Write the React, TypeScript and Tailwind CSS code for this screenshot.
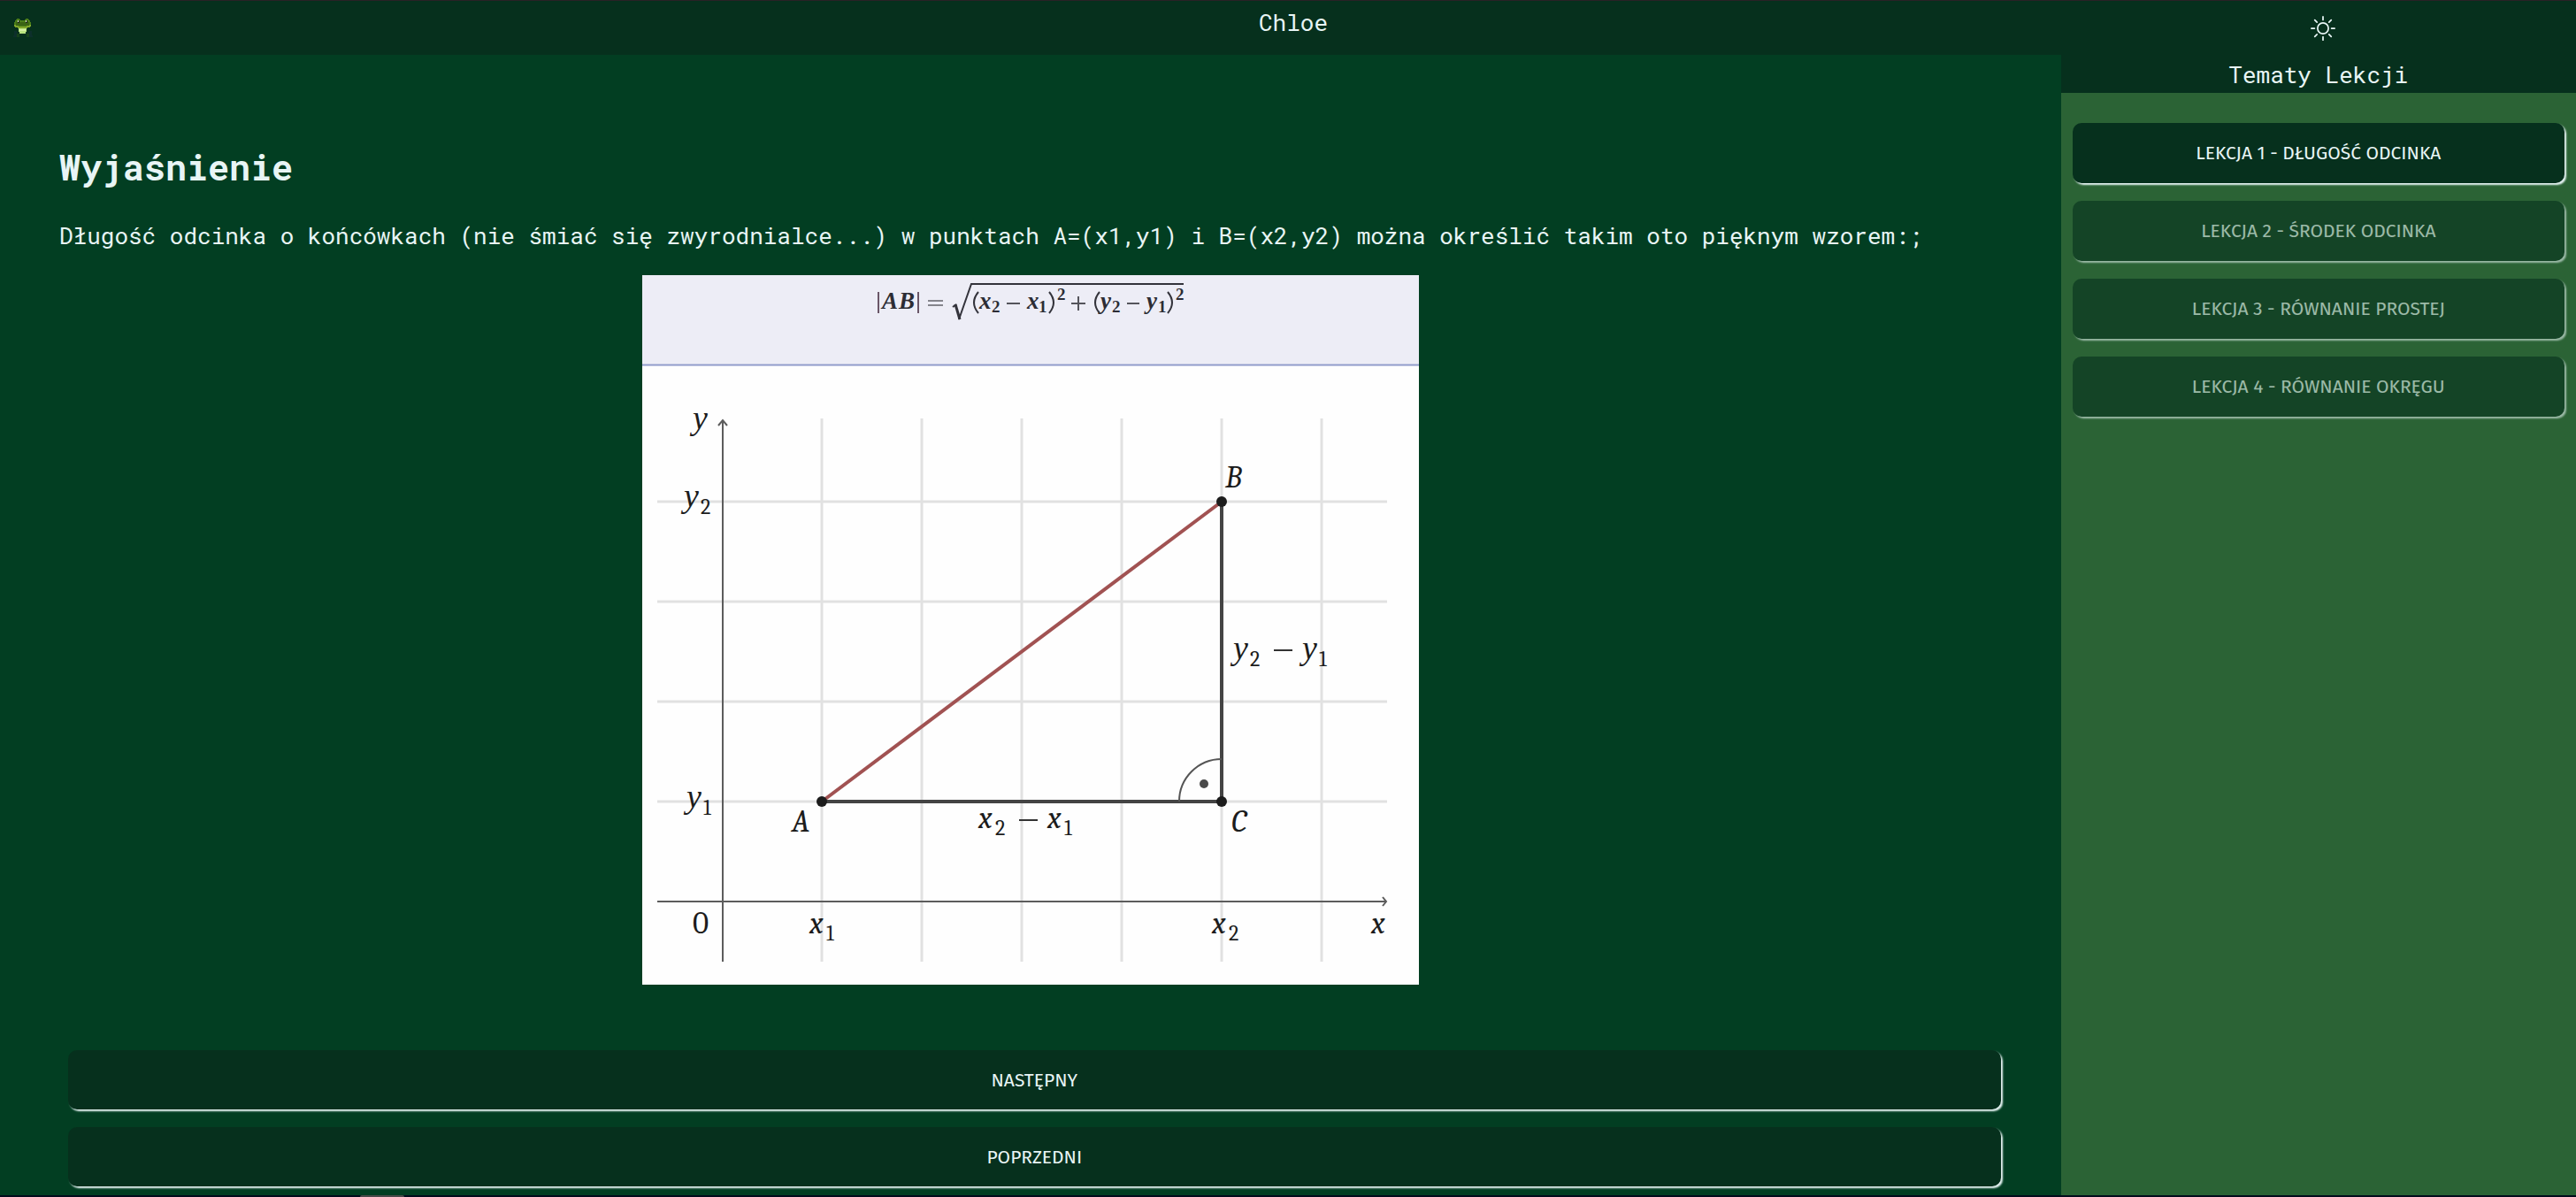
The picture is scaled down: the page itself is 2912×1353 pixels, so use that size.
import { BsSun } from "react-icons/bs";

const lessons = [
  { title: "LEKCJA 1 - DŁUGOŚĆ ODCINKA", open: true },
  { title: "LEKCJA 2 - ŚRODEK ODCINKA", open: false },
  { title: "LEKCJA 3 - RÓWNANIE PROSTEJ", open: false },
  { title: "LEKCJA 4 - RÓWNANIE OKRĘGU", open: false },
];

const buttonBase =
  "w-full rounded-[10px] bg-[#06301d] text-center font-['Fira_Sans','Noto_Sans',sans-serif] text-[21px] leading-7 text-[#e8f5f5] shadow-[2px_2px_2px_#e8f5f5]";

function Frog() {
  return (
    <svg viewBox="0 0 24 22" className="h-[22px] w-6" shapeRendering="crispEdges" role="img" aria-label="Żabka">
      <path fill="#0d2f2b" d="M2 14h3v7H1v-2h1zM19 14h3v5h1v2h-4z" />
      <path fill="#14401a" d="M5 17h3v4H5zM16 17h3v4h-3z" />
      <path fill="#4b7d1a" d="M5 0h3v1h1v1h5V1h1V0h3v1h1v1h1v2h1v3h-1v2H3V7H2V4h1V2h1V1h1z" />
      <path fill="#3a6414" d="M4 4h15v4H4z" />
      <path fill="#7fa62a" d="M2 7h2v1h3v1h9V8h3V7h2v2h-1v1h-3v1H6v-1H3V9H2z" />
      <path fill="#1c2410" d="M6 2h2v3H6zM15 2h2v3h-2z" />
      <path fill="#e6efe0" d="M6 2h1v2H6zM15 2h1v2h-1z" />
      <path fill="#b9e37f" d="M7 11h9v4h-1v2H8v-2H7z" />
      <path fill="#d6f0a4" d="M8 12h7v2H8z" />
    </svg>
  );
}

const gridX = [203, 316, 429, 542, 655, 768];
const gridY = [256, 369, 482, 595];

function Sym({ x, y, v, sub }: { x: number; y: number; v: string; sub?: string }) {
  const family = v === "y" ? "'Liberation Serif',serif" : "'Cambria','Liberation Serif',serif";
  return (
    <>
      <text x={x} y={y} fontSize={v === "y" ? 38 : 35} fontStyle="italic" fontFamily={family}>{v}</text>
      {sub && <text x={x + 19} y={y + 8} fontSize="24">{sub}</text>}
    </>
  );
}

function Figure() {
  return (
    <svg
      viewBox="0 0 878 802"
      className="w-[878px] max-w-full"
      fontFamily="'Cambria','Liberation Serif',serif"
      fill="#1c1c1c"
      role="img"
      aria-label="Długość odcinka AB w układzie współrzędnych"
    >
      <rect width="878" height="802" fill="#fefefe" />
      <rect width="878" height="101" fill="#ededf6" />
      <rect y="100" width="878" height="3" fill="#c5cae3" />
      <rect y="101" width="878" height="1" fill="#8f9bcb" />

      <g fontSize="27" fill="#2c2c34" fontWeight="bold" fontFamily="'Liberation Serif',serif">
        <g fontStyle="italic">
          <text x="271" y="38">A</text>
          <text x="290" y="38">B</text>
          <text x="381" y="38">x</text>
          <text x="435" y="38">x</text>
          <text x="518" y="38">y</text>
          <text x="570" y="38">y</text>
        </g>
        <g fontSize="19">
          <text x="395" y="42">2</text>
          <text x="448" y="42">1</text>
          <text x="531" y="42">2</text>
          <text x="583" y="42">1</text>
          <text x="469" y="28">2</text>
          <text x="603" y="28">2</text>
        </g>
      </g>
      <g fill="none" stroke="#33333b" strokeWidth="2">
        <path d="M267 19v24M312 19v24" stroke="#6a5668" />
        <path d="M323 29h17M323 34h17" stroke="#85858c" />
        <path d="M412 32h15M548 32h14M485 32h16M493 24v16" stroke="#55555c" />
        <path d="M380 19q-10 12 0 24M460 19q10 12 0 24M517 19q-10 12 0 24M594 19q10 12 0 24" />
        <path d="M358 50L372 10H612" />
        <path d="M351 36l4-3" />
        <path d="M354 33l5 17" strokeWidth="3" />
      </g>

      <g stroke="#e1e1e1" strokeWidth="3">
        {gridX.map((x) => (
          <line key={x} x1={x} x2={x} y1="162" y2="776" />
        ))}
        {gridY.map((y) => (
          <line key={y} x1="17" x2="842" y1={y} y2={y} />
        ))}
      </g>

      <g fill="none" stroke="#5c5c5c" strokeWidth="2">
        <path d="M91 776V165M86 170l5-6 5 6" />
        <path d="M17 708H840M837 703l4 5-4 5" />
      </g>
      <path d="M203 595L655 256" stroke="#a15252" strokeWidth="4" fill="none" />
      <path d="M203 595H655V256" stroke="#444444" strokeWidth="4" fill="none" />
      <path d="M607 595A48 48 0 0 1 655 547" stroke="#555555" strokeWidth="2" fill="none" />
      <circle cx="635" cy="575" r="5" fill="#4a4a4a" />
      <circle cx="203" cy="595" r="6" />
      <circle cx="655" cy="595" r="6" />
      <circle cx="655" cy="256" r="6" />

      <Sym x={57} y={174} v="y" />
      <Sym x={47} y={262} v="y" sub="2" />
      <Sym x={50} y={602} v="y" sub="1" />
      <Sym x={659} y={240} v="B" />
      <Sym x={169} y={629} v="A" />
      <Sym x={666} y={629} v="C" />
      <Sym x={380} y={625} v="x" sub="2" />
      <Sym x={458} y={625} v="x" sub="1" />
      <Sym x={668} y={434} v="y" sub="2" />
      <Sym x={746} y={434} v="y" sub="1" />
      <path d="M426 616h21M714 424h21" stroke="#333333" strokeWidth="2" />
      <text x="57" y="744" fontSize="35">0</text>
      <Sym x={189} y={744} v="x" sub="1" />
      <Sym x={644} y={744} v="x" sub="2" />
      <Sym x={824} y={744} v="x" />
    </svg>
  );
}

export default function App() {
  return (
    <div className="flex min-h-screen flex-col bg-[#023e22] font-['Roboto_Mono','Liberation_Mono',monospace] text-[26px] leading-9 text-[#e8f5f5]">
      <header className="flex h-[62px] border-t border-[#2a2226] bg-[#06301d]">
        <div className="w-1/5 pt-5 pl-[14px]">
          <Frog />
        </div>
        <h1 className="flex-1 pt-[6px] pl-3 text-center">Chloe</h1>
        <div className="flex w-1/5 justify-center pt-[17px] pl-[10px]">
          <button aria-label="Zmień motyw" className="size-7">
            <BsSun className="size-7" />
          </button>
        </div>
      </header>

      <div className="flex flex-1">
        <main className="flex w-4/5 flex-col px-[67px]">
          <h2 className="mt-[99px] text-[40px] leading-[56px] font-bold">Wyjaśnienie</h2>
          <p className="mt-[31px]">
            Długość odcinka o końcówkach (nie śmiać się zwyrodnialce...) w punktach A=(x1,y1) i B=(x2,y2) można określić
            takim oto pięknym wzorem:;
          </p>
          <div className="mt-[27px] flex justify-center">
            <Figure />
          </div>
          <div className="mt-[74px] flex flex-col gap-5 pr-px pb-[10px] pl-[10px]">
            <button className={`${buttonBase} h-[67px]`}>NASTĘPNY</button>
            <button className={`${buttonBase} h-[67px]`}>POPRZEDNI</button>
          </div>
        </main>

        <aside className="w-1/5 bg-[#2b6335]">
          <h2 className="bg-[#06301d] pt-1 pb-[3px] text-center">Tematy Lekcji</h2>
          <nav className="flex flex-col gap-5 px-[13px] pt-[34px]">
            {lessons.map((l) => (
              <button key={l.title} disabled={!l.open} className={`${buttonBase} h-[68px] disabled:opacity-60`}>
                {l.title}
              </button>
            ))}
          </nav>
        </aside>
      </div>

      <footer className="h-[2px] bg-[#020b1c] pl-[407px]">
        <div className="h-[2px] w-[50px] rounded-t-full bg-[#4a4a4a]" />
      </footer>
    </div>
  );
}
